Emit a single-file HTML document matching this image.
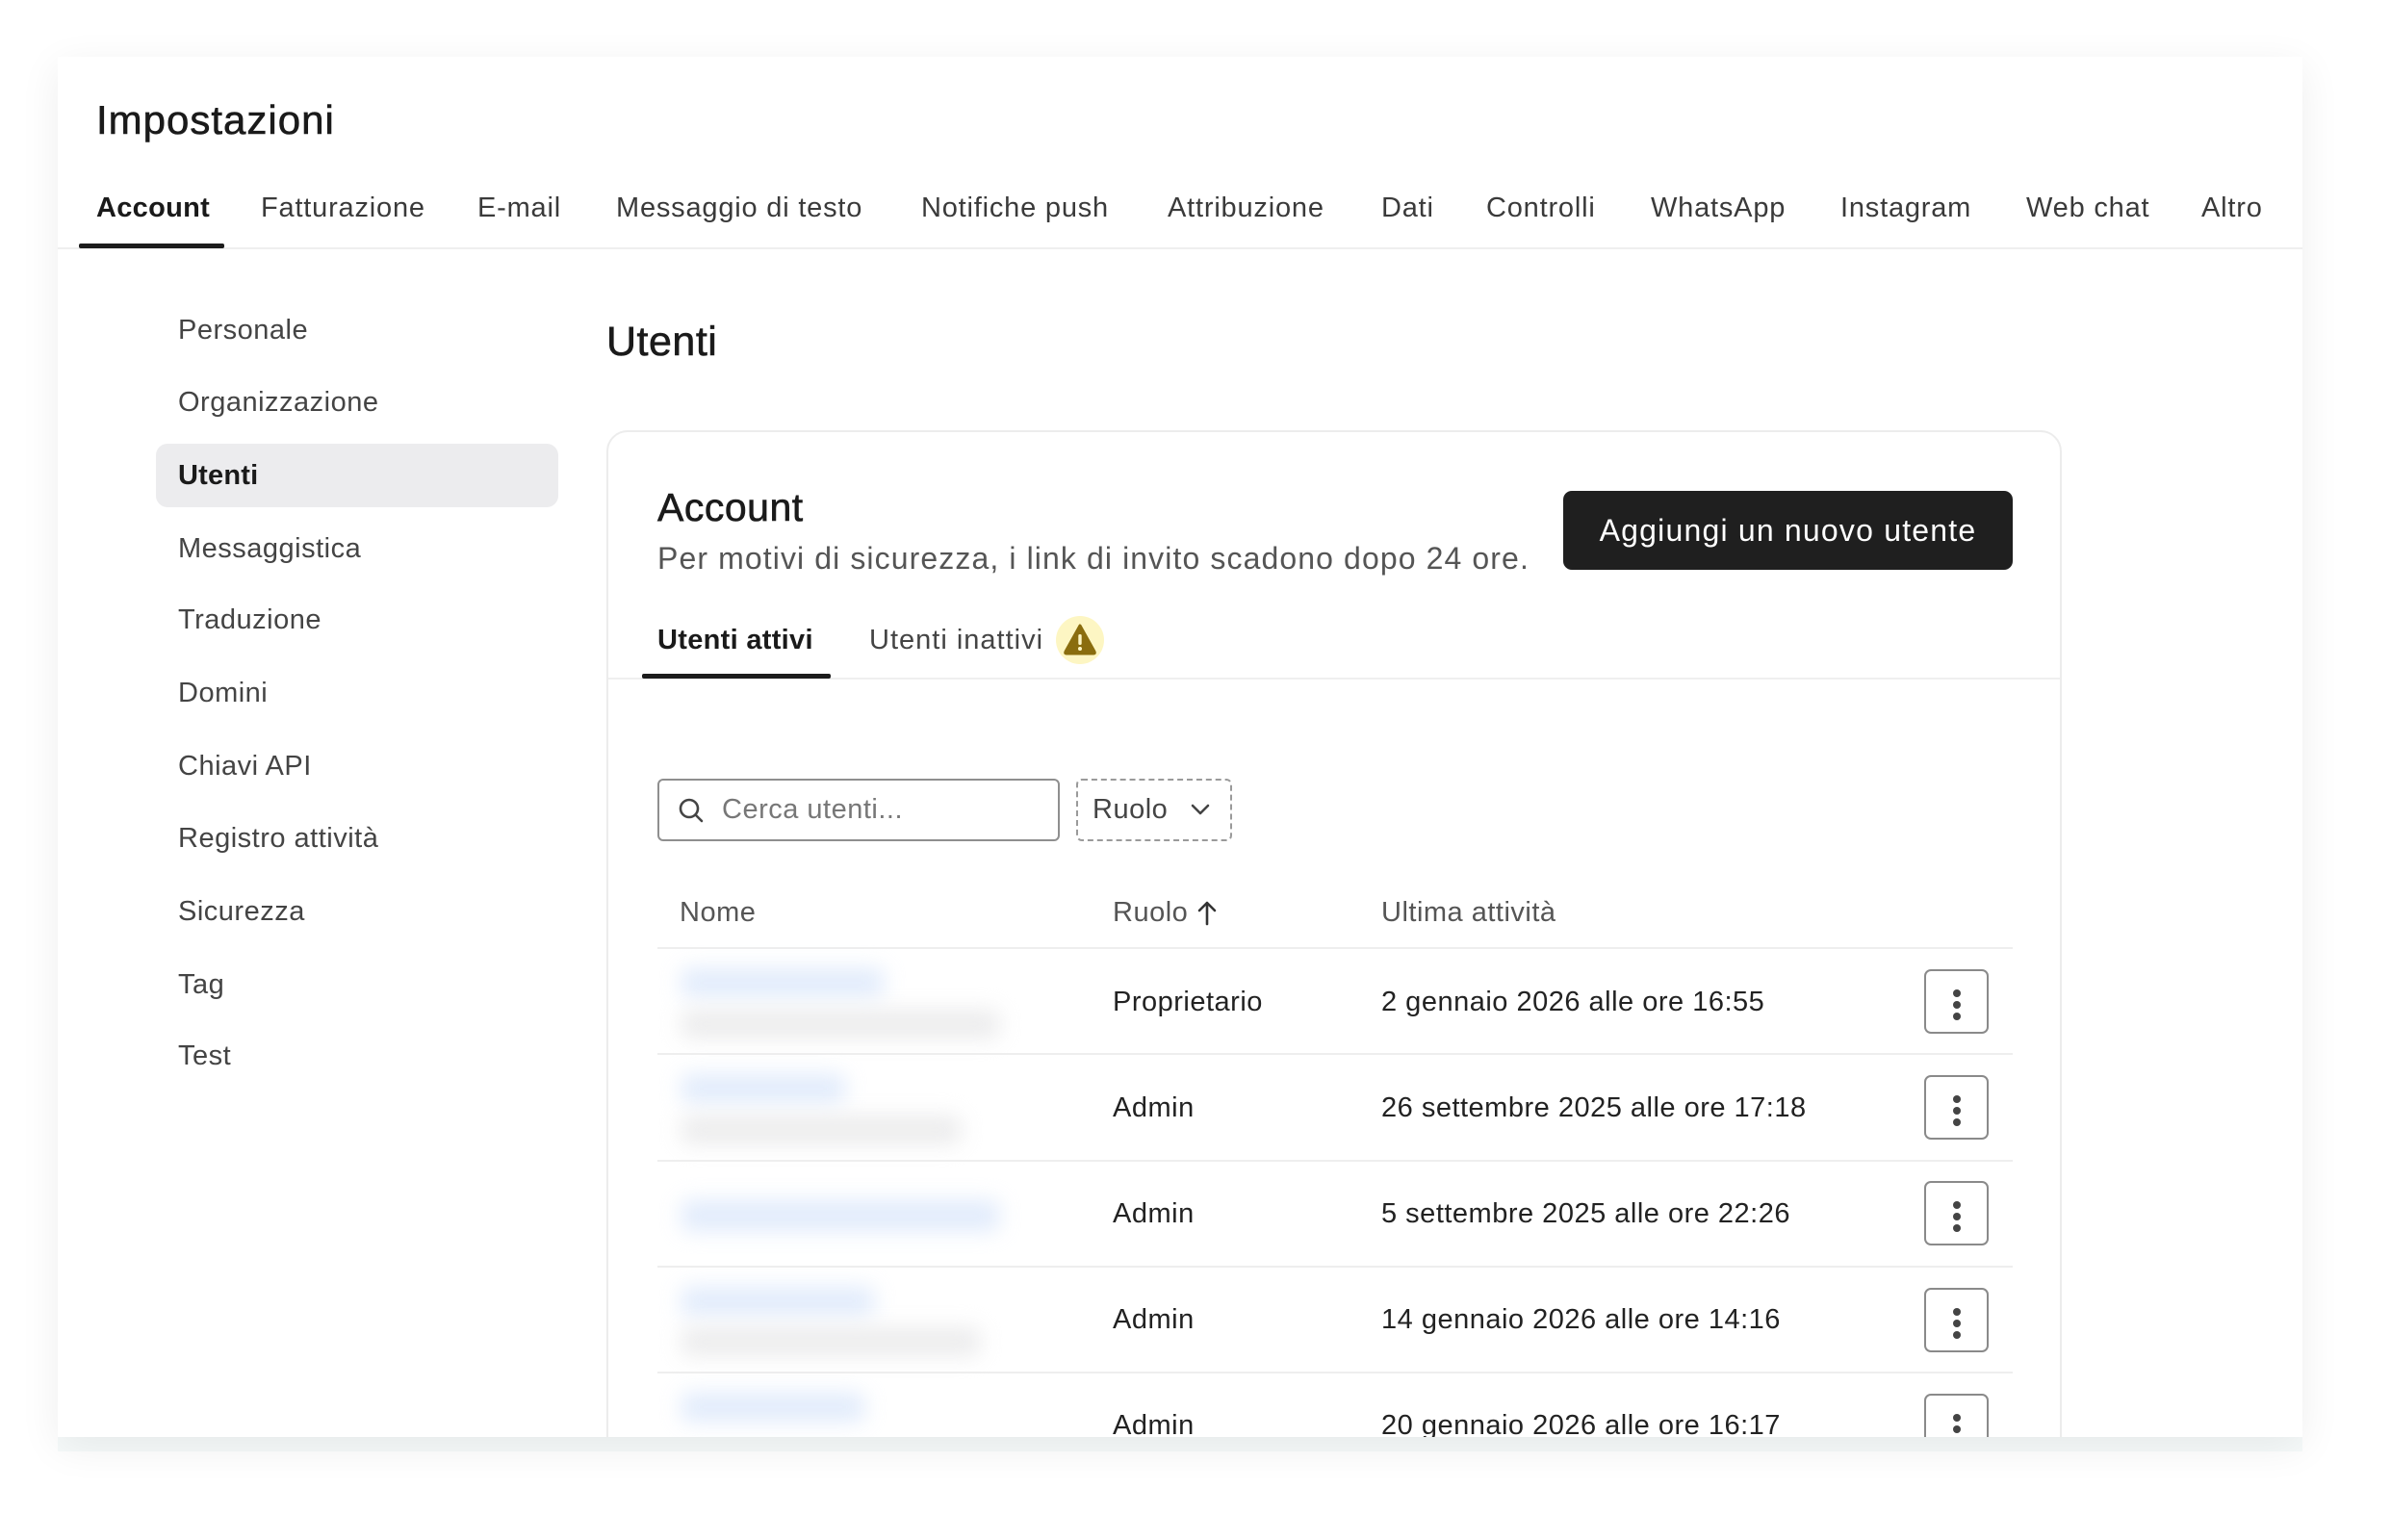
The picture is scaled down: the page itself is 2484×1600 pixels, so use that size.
<!DOCTYPE html>
<html><head><meta charset="utf-8"><style>
*{margin:0;padding:0;box-sizing:border-box}
body{width:2484px;height:1600px;background:#fff;position:relative;overflow:hidden;font-family:"Liberation Sans",sans-serif;color:#1c1c1c;letter-spacing:0.5px}
.a{position:absolute;white-space:nowrap}
#panel{position:absolute;left:60px;top:59px;width:2332px;height:1434px;background:#fff;box-shadow:0 10px 40px rgba(0,0,0,0.07);overflow:hidden}
#strip{position:absolute;left:60px;top:1493px;width:2332px;height:15px;background:#f6fafa}
.tab{position:absolute;top:141px;font-size:29px;color:#3a3a3a;letter-spacing:0.8px}
.side{position:absolute;left:125px;font-size:29px;color:#444}
.t{font-size:29px;color:#222}
.row{position:absolute;left:623px;width:1408px;height:2px;background:#eeeeee}
.kb{position:absolute;left:1939px;width:67px;height:67px;border:2px solid #8a8a8a;border-radius:7px;background:#fff}
.kb i{position:absolute;left:28px;width:8px;height:8px;border-radius:50%;background:#444}
.blur{position:absolute;filter:blur(11px);border-radius:6px;opacity:.85}
</style></head><body>
<div id="strip"></div>
<div id="panel">
<div class="a" style="left:40px;top:42px;font-size:42px;color:#1a1a1a;letter-spacing:1px;-webkit-text-stroke:0.6px #1a1a1a">Impostazioni</div>
<div class="tab" style="left:40px;color:#1a1a1a;font-weight:bold;letter-spacing:0.3px">Account</div>
<div class="tab" style="left:211px">Fatturazione</div>
<div class="tab" style="left:436px">E-mail</div>
<div class="tab" style="left:580px">Messaggio di testo</div>
<div class="tab" style="left:897px">Notifiche push</div>
<div class="tab" style="left:1153px">Attribuzione</div>
<div class="tab" style="left:1375px">Dati</div>
<div class="tab" style="left:1484px">Controlli</div>
<div class="tab" style="left:1655px">WhatsApp</div>
<div class="tab" style="left:1852px">Instagram</div>
<div class="tab" style="left:2045px">Web chat</div>
<div class="tab" style="left:2227px">Altro</div>
<div class="a" style="left:0;top:198px;width:2332px;height:2px;background:#efefef"></div>
<div class="a" style="left:22px;top:194px;width:151px;height:5px;background:#1c1c1c;border-radius:2px"></div>

<div class="a" style="left:102px;top:402px;width:418px;height:66px;background:#ececee;border-radius:12px"></div>
<div class="side" style="top:268px">Personale</div>
<div class="side" style="top:343px">Organizzazione</div>
<div class="side" style="top:419px;color:#1a1a1a;font-weight:bold;letter-spacing:0.2px">Utenti</div>
<div class="side" style="top:495px">Messaggistica</div>
<div class="side" style="top:569px">Traduzione</div>
<div class="side" style="top:645px">Domini</div>
<div class="side" style="top:721px">Chiavi API</div>
<div class="side" style="top:796px">Registro attività</div>
<div class="side" style="top:872px">Sicurezza</div>
<div class="side" style="top:948px">Tag</div>
<div class="side" style="top:1022px">Test</div>

<div class="a" style="left:570px;top:272px;font-size:43px;color:#1a1a1a;-webkit-text-stroke:0.6px #1a1a1a">Utenti</div>

<div class="a" style="left:570px;top:388px;width:1512px;height:1200px;border:2px solid #ececec;border-radius:22px;background:#fff"></div>
<div class="a" style="left:623px;top:445px;font-size:41px;color:#1a1a1a;-webkit-text-stroke:0.6px #1a1a1a">Account</div>
<div class="a" style="left:623px;top:503px;font-size:32px;color:#555;letter-spacing:1.1px">Per motivi di sicurezza, i link di invito scadono dopo 24 ore.</div>
<div class="a" style="left:1564px;top:451px;width:467px;height:82px;background:#1f1f1f;border-radius:9px;color:#fff;font-size:32px;text-align:center;line-height:82px;letter-spacing:1.2px">Aggiungi un nuovo utente</div>
<div class="a" style="left:623px;top:590px;font-size:29px;color:#1a1a1a;font-weight:bold;letter-spacing:0.3px">Utenti attivi</div>
<div class="a" style="left:843px;top:590px;font-size:29px;color:#444;letter-spacing:1px">Utenti inattivi</div>
<div class="a" style="left:1037px;top:581px;width:50px;height:50px;border-radius:50%;background:#fdf6c3"></div>
<svg class="a" style="left:1042px;top:585px" width="40" height="40" viewBox="0 0 40 40"><path d="M20 6 L35 33 Q36 35 34 35 L6 35 Q4 35 5 33 Z" fill="#8a6d0e" stroke="#8a6d0e" stroke-width="3" stroke-linejoin="round"/><rect x="18.3" y="15" width="3.4" height="11" rx="1.5" fill="#fdf6c3"/><circle cx="20" cy="30" r="2" fill="#fdf6c3"/></svg>
<div class="a" style="left:572px;top:645px;width:1508px;height:2px;background:#efefef"></div>
<div class="a" style="left:607px;top:641px;width:196px;height:5px;background:#1c1c1c;border-radius:2px"></div>

<div class="a" style="left:623px;top:750px;width:418px;height:65px;border:2px solid #8f8f8f;border-radius:6px"></div>
<svg class="a" style="left:643px;top:768px" width="30" height="30" viewBox="0 0 30 30"><circle cx="13" cy="13" r="9" fill="none" stroke="#444" stroke-width="2.6"/><path d="M19.5 19.5 L26 26" stroke="#444" stroke-width="2.6" stroke-linecap="round"/></svg>
<div class="a" style="left:690px;top:766px;font-size:29px;color:#777">Cerca utenti...</div>
<div class="a" style="left:1058px;top:750px;width:162px;height:65px;border:2px dashed #9a9a9a;border-radius:6px"></div>
<div class="a" style="left:1075px;top:766px;font-size:29px;color:#444">Ruolo</div>
<svg class="a" style="left:1176px;top:774px" width="22" height="16" viewBox="0 0 22 16"><path d="M3 4 L11 12 L19 4" fill="none" stroke="#444" stroke-width="2.6" stroke-linecap="round" stroke-linejoin="round"/></svg>

<div class="a" style="left:646px;top:873px;font-size:29px;color:#555">Nome</div>
<div class="a" style="left:1096px;top:873px;font-size:29px;color:#555">Ruolo</div>
<svg class="a" style="left:1183px;top:874px" width="22" height="30" viewBox="0 0 22 30"><path d="M11 27 L11 5 M3 13 L11 5 L19 13" fill="none" stroke="#333" stroke-width="2.6" stroke-linecap="round" stroke-linejoin="round"/></svg>
<div class="a" style="left:1375px;top:873px;font-size:29px;color:#555">Ultima attività</div>
<div class="row" style="top:925px"></div>

<div class="blur" style="left:648px;top:947px;width:210px;height:30px;background:#dce8fb"></div>
<div class="blur" style="left:648px;top:990px;width:330px;height:30px;background:#e9e9ea"></div>
<div class="a t" style="left:1096px;top:966px">Proprietario</div>
<div class="a t" style="left:1375px;top:966px">2 gennaio 2026 alle ore 16:55</div>
<div class="kb" style="top:948px"><i style="top:19px"></i><i style="top:31px"></i><i style="top:43px"></i></div>
<div class="row" style="top:1035px"></div>

<div class="blur" style="left:648px;top:1057px;width:170px;height:30px;background:#dce8fb"></div>
<div class="blur" style="left:648px;top:1100px;width:290px;height:30px;background:#e9e9ea"></div>
<div class="a t" style="left:1096px;top:1076px">Admin</div>
<div class="a t" style="left:1375px;top:1076px">26 settembre 2025 alle ore 17:18</div>
<div class="kb" style="top:1058px"><i style="top:19px"></i><i style="top:31px"></i><i style="top:43px"></i></div>
<div class="row" style="top:1146px"></div>

<div class="blur" style="left:648px;top:1188px;width:330px;height:32px;background:#dce8fb"></div>
<div class="a t" style="left:1096px;top:1186px">Admin</div>
<div class="a t" style="left:1375px;top:1186px">5 settembre 2025 alle ore 22:26</div>
<div class="kb" style="top:1168px"><i style="top:19px"></i><i style="top:31px"></i><i style="top:43px"></i></div>
<div class="row" style="top:1256px"></div>

<div class="blur" style="left:648px;top:1278px;width:200px;height:30px;background:#dce8fb"></div>
<div class="blur" style="left:648px;top:1320px;width:310px;height:30px;background:#e9e9ea"></div>
<div class="a t" style="left:1096px;top:1296px">Admin</div>
<div class="a t" style="left:1375px;top:1296px">14 gennaio 2026 alle ore 14:16</div>
<div class="kb" style="top:1279px"><i style="top:19px"></i><i style="top:31px"></i><i style="top:43px"></i></div>
<div class="row" style="top:1366px"></div>

<div class="blur" style="left:648px;top:1388px;width:190px;height:30px;background:#dce8fb"></div>
<div class="a t" style="left:1096px;top:1406px">Admin</div>
<div class="a t" style="left:1375px;top:1406px">20 gennaio 2026 alle ore 16:17</div>
<div class="kb" style="top:1389px"><i style="top:19px"></i><i style="top:31px"></i><i style="top:43px"></i></div>
</div>
</body></html>
